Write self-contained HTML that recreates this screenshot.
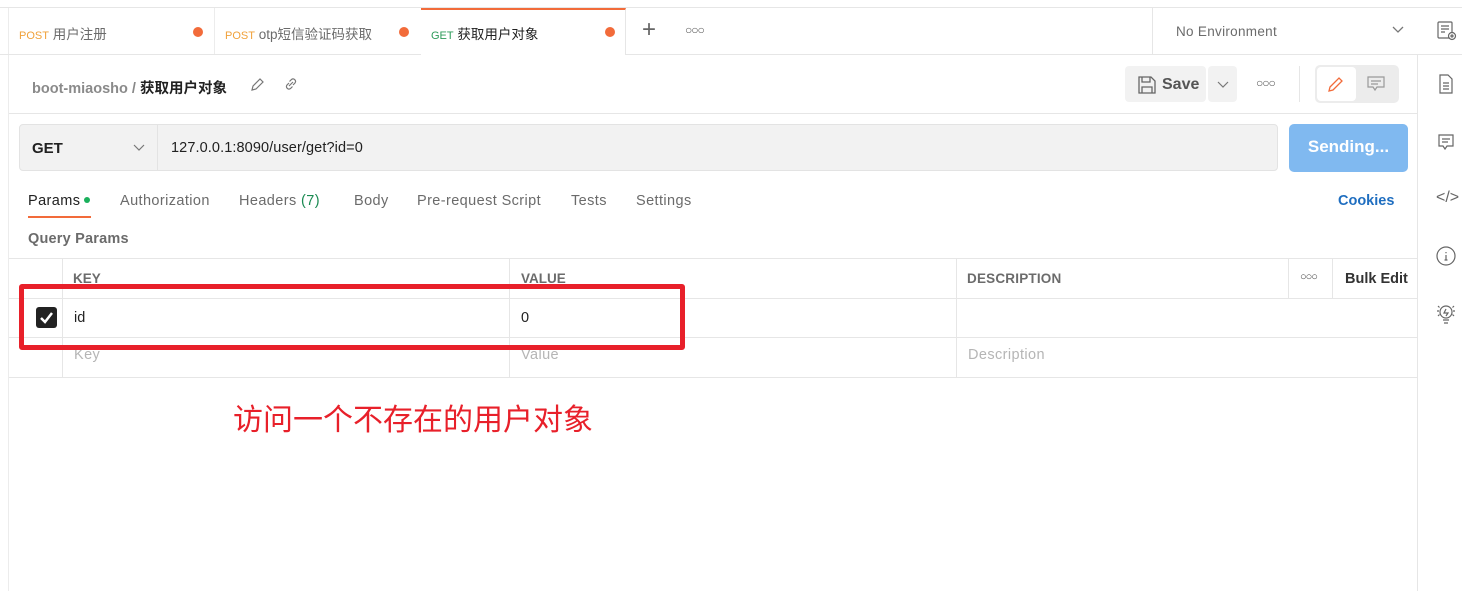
<!DOCTYPE html>
<html><head><meta charset="utf-8"><style>
*{box-sizing:border-box;margin:0;padding:0}
body{width:1462px;height:591px;overflow:hidden;background:#fff;font-family:"Liberation Sans","Noto Sans CJK SC",sans-serif;color:#212121;position:relative;font-size:14px}
.a{position:absolute;white-space:nowrap}
.g{color:#6b6b6b}
.t{font-size:14.5px;letter-spacing:0.4px}
.dots{font-size:12px;color:#555;letter-spacing:-1px;font-weight:bold}
</style></head><body>
<div class="a" style="left:0;top:7px;width:1462px;height:1px;background:#e6e6e6"></div>
<div class="a" style="left:8px;top:8px;width:1px;height:583px;background:#ececec"></div>
<div class="a" style="left:0;top:54px;width:1462px;height:1px;background:#e6e6e6"></div>
<!-- tabs -->
<div class="a" style="left:214px;top:8px;width:1px;height:46px;background:#ececec"></div>
<div class="a" style="left:421px;top:8px;width:205px;height:47px;background:#fff;border-top:2px solid #f26b3a;border-right:1px solid #e6e6e6"></div>
<div class="a" style="left:19px;top:23px;font-size:13.5px"><span style="color:#f0a13a;font-size:11px">POST</span> <span class="g">用户注册</span></div>
<div class="a" style="left:193px;top:27px;width:10px;height:10px;border-radius:5px;background:#f26b3a"></div>
<div class="a" style="left:225px;top:23px;font-size:13.5px"><span style="color:#f0a13a;font-size:11px">POST</span> <span class="g">otp短信验证码获取</span></div>
<div class="a" style="left:399px;top:27px;width:10px;height:10px;border-radius:5px;background:#f26b3a"></div>
<div class="a" style="left:431px;top:23px;font-size:13.5px"><span style="color:#2d9b5a;font-size:11px">GET</span> <span>获取用户对象</span></div>
<div class="a" style="left:605px;top:27px;width:10px;height:10px;border-radius:5px;background:#f26b3a"></div>
<div class="a" style="left:642px;top:16px;font-size:24px;color:#666">+</div>
<div class="a dots" style="left:685px;top:23px">○○○</div>
<div class="a" style="left:1152px;top:8px;width:1px;height:46px;background:#e6e6e6"></div>
<div class="a g" style="left:1176px;top:24px;font-size:13.5px;letter-spacing:0.3px">No Environment</div>
<svg class="a" style="left:1392px;top:26px" width="12" height="8"><path d="M1 1l5 5 5-5" fill="none" stroke="#777" stroke-width="1.3"/></svg>
<div class="a" style="left:1417px;top:54px;width:1px;height:537px;background:#e6e6e6"></div>
<!-- right icons -->
<svg class="a" style="left:1436px;top:20px" width="22" height="22" fill="none" stroke="#666" stroke-width="1.2"><rect x="2" y="2" width="14" height="16" rx="1"/><path d="M5 6h8M5 9h8M5 12h4"/><circle cx="16" cy="16" r="3.5" fill="#fff"/><circle cx="16" cy="16" r="1"/></svg>
<svg class="a" style="left:1438px;top:74px" width="16" height="20" fill="none" stroke="#666" stroke-width="1.2"><path d="M2 1h8l4 4v14H2z M5 9h6M5 12h6M5 15h6"/></svg>
<svg class="a" style="left:1437px;top:133px" width="18" height="18" fill="none" stroke="#666" stroke-width="1.2"><path d="M2 2h14v11H10l-2 3-2-3H2z M5 6h8M5 9h6"/></svg>
<div class="a" style="left:1436px;top:189px;color:#666;font-size:16px">&lt;/&gt;</div>
<svg class="a" style="left:1436px;top:246px" width="20" height="20" fill="none" stroke="#666" stroke-width="1.2"><circle cx="10" cy="10" r="9"/><path d="M10 9v5M10 6v1.2M8.5 14h3"/></svg>
<svg class="a" style="left:1435px;top:303px" width="22" height="24" fill="none" stroke="#666" stroke-width="1.2"><circle cx="11" cy="9" r="6"/><path d="M8 17h6M9 20h4M11 6l-2 4h4l-2 3M2 8h2M18 8h2M3 3l1.5 1.5M19 3l-1.5 1.5M3 13l1.5-1.5M19 13l-1.5-1.5"/></svg>
<!-- breadcrumb -->
<div class="a" style="left:32px;top:77px;font-size:14.5px;font-weight:bold"><span style="color:#8a8a8a">boot-miaosho</span> <span style="color:#888">/</span> 获取用户对象</div>
<svg class="a" style="left:250px;top:77px" width="15" height="15" fill="none" stroke="#777" stroke-width="1.2"><path d="M2 13l1-4 7-7 3 3-7 7z"/></svg>
<svg class="a" style="left:283px;top:76px" width="16" height="16" fill="none" stroke="#777" stroke-width="1.2"><path d="M6 10l4-4M6 7l-2 2a2.5 2.5 0 003.5 3.5l2-2M10 9l2-2a2.5 2.5 0 00-3.5-3.5L6.5 5.5"/></svg>
<div class="a" style="left:1125px;top:66px;width:81px;height:36px;background:#f2f2f2;border-radius:4px"></div>
<svg class="a" style="left:1137px;top:75px" width="20" height="20" fill="none" stroke="#666" stroke-width="1.3"><path d="M2 2h12l4 4v12H2z M5 2v5h8V2 M5 18v-6h10v6"/></svg>
<div class="a" style="left:1162px;top:76px;font-size:16px;font-weight:bold;color:#555">Save</div>
<div class="a" style="left:1208px;top:66px;width:29px;height:36px;background:#f2f2f2;border-radius:4px"></div>
<svg class="a" style="left:1217px;top:81px" width="12" height="8"><path d="M1 1l5 5 5-5" fill="none" stroke="#777" stroke-width="1.2"/></svg>
<div class="a dots" style="left:1256px;top:76px">○○○</div>
<div class="a" style="left:1299px;top:66px;width:1px;height:36px;background:#e6e6e6"></div>
<div class="a" style="left:1315px;top:65px;width:84px;height:38px;background:#ececec;border-radius:5px"></div>
<div class="a" style="left:1317px;top:67px;width:39px;height:34px;background:#fff;border-radius:4px"></div>
<svg class="a" style="left:1327px;top:75px" width="18" height="18" fill="none" stroke="#f26b3a" stroke-width="1.3"><path d="M2 16l1-4 9-9 3 3-9 9z"/></svg>
<svg class="a" style="left:1367px;top:76px" width="18" height="16" fill="none" stroke="#999" stroke-width="1.2"><path d="M1 1h16v10H10l-2 3-2-3H1z M4 5h10M4 8h7"/></svg>
<div class="a" style="left:9px;top:113px;width:1408px;height:1px;background:#e6e6e6"></div>
<!-- url -->
<div class="a" style="left:19px;top:124px;width:1259px;height:47px;background:#f2f2f2;border:1px solid #e3e3e3;border-radius:4px"></div>
<div class="a" style="left:157px;top:125px;width:1px;height:45px;background:#e3e3e3"></div>
<div class="a" style="left:32px;top:140px;font-weight:bold;font-size:15px">GET</div>
<svg class="a" style="left:133px;top:144px" width="12" height="8"><path d="M1 1l5 5 5-5" fill="none" stroke="#777" stroke-width="1.2"/></svg>
<div class="a" style="left:171px;top:140px;font-size:14.5px;letter-spacing:0.1px">127.0.0.1:8090/user/get?id=0</div>
<div class="a" style="left:1289px;top:124px;width:119px;height:48px;background:#80b9f0;border-radius:5px;color:#fff;font-weight:bold;font-size:17px;text-align:center;line-height:46px">Sending...</div>
<!-- tabs row -->
<div class="a t" style="left:28px;top:193px">Params</div>
<div class="a" style="left:84px;top:197px;width:6px;height:6px;border-radius:3px;background:#1ab05c"></div>
<div class="a" style="left:28px;top:216px;width:63px;height:2px;background:#f26b3a"></div>
<div class="a g t" style="left:120px;top:193px">Authorization</div>
<div class="a g t" style="left:239px;top:193px">Headers <span style="color:#1a8a52">(7)</span></div>
<div class="a g t" style="left:354px;top:193px">Body</div>
<div class="a g t" style="left:417px;top:193px">Pre-request Script</div>
<div class="a g t" style="left:571px;top:193px">Tests</div>
<div class="a g t" style="left:636px;top:193px">Settings</div>
<div class="a" style="left:1338px;top:193px;color:#1f6ec0;font-weight:bold;font-size:14.5px">Cookies</div>
<div class="a g" style="left:28px;top:231px;font-weight:bold;font-size:14.5px;letter-spacing:0.2px">Query Params</div>
<!-- table -->
<div class="a" style="left:9px;top:258px;width:1408px;height:1px;background:#e6e6e6"></div>
<div class="a" style="left:9px;top:298px;width:1408px;height:1px;background:#e6e6e6"></div>
<div class="a" style="left:9px;top:337px;width:1408px;height:1px;background:#e6e6e6"></div>
<div class="a" style="left:9px;top:377px;width:1408px;height:1px;background:#e6e6e6"></div>
<div class="a" style="left:62px;top:258px;width:1px;height:119px;background:#e6e6e6"></div>
<div class="a" style="left:509px;top:258px;width:1px;height:119px;background:#e6e6e6"></div>
<div class="a" style="left:956px;top:258px;width:1px;height:119px;background:#e6e6e6"></div>
<div class="a" style="left:1288px;top:258px;width:1px;height:40px;background:#e6e6e6"></div>
<div class="a" style="left:1332px;top:258px;width:1px;height:40px;background:#e6e6e6"></div>
<div class="a g" style="left:73px;top:271px;font-size:13.5px;font-weight:bold">KEY</div>
<div class="a g" style="left:521px;top:271px;font-size:13.5px;font-weight:bold">VALUE</div>
<div class="a g" style="left:967px;top:271px;font-size:13.5px;font-weight:bold;letter-spacing:0.2px">DESCRIPTION</div>
<div class="a dots" style="left:1300px;top:271px;font-size:11px;color:#444">○○○</div>
<div class="a" style="left:1345px;top:271px;font-size:14.5px;font-weight:bold;color:#333">Bulk Edit</div>
<div class="a" style="left:36px;top:307px;width:21px;height:21px;background:#222;border-radius:3px"></div>
<svg class="a" style="left:38px;top:310px" width="17" height="15"><path d="M3 8l4 4 7-9" fill="none" stroke="#fff" stroke-width="2.5"/></svg>
<div class="a" style="left:74px;top:310px;font-size:14.5px">id</div>
<div class="a" style="left:521px;top:310px;font-size:14.5px">0</div>
<div class="a t" style="left:74px;top:347px;color:#b5b5b5">Key</div>
<div class="a t" style="left:521px;top:347px;color:#b5b5b5">Value</div>
<div class="a t" style="left:968px;top:347px;color:#b5b5b5">Description</div>
<div class="a" style="left:19px;top:284px;width:666px;height:66px;border:5px solid #e8202a;border-radius:3px"></div>
<div class="a" style="left:233px;top:395px;font-size:30px;color:#e8202a">访问一个不存在的用户对象</div>
</body></html>
